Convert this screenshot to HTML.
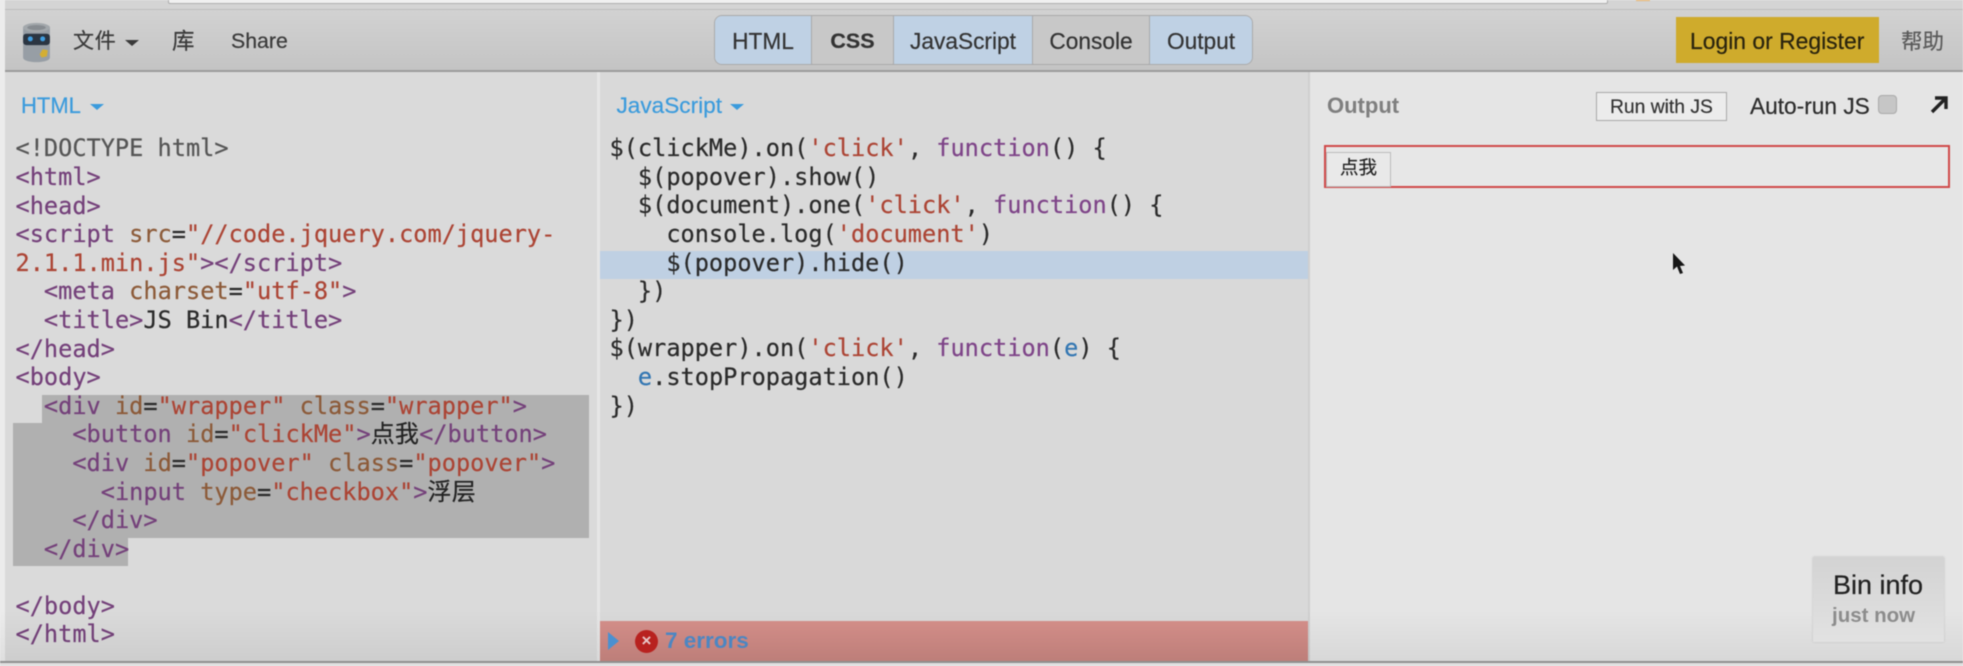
<!DOCTYPE html>
<html><head><meta charset="utf-8"><style>
html,body{margin:0;padding:0;width:1963px;height:666px;overflow:hidden;background:#efefef}
#w{position:absolute;left:0;top:0;width:1963px;height:666px;overflow:hidden;filter:blur(.6px);font-family:"Liberation Sans","Noto Sans CJK SC",sans-serif}
#w div,#w span.a{position:absolute}
.t{white-space:nowrap;line-height:1;-webkit-text-stroke:.2px currentColor}
.code{font:23.6px/28.6px "DejaVu Sans Mono","Noto Sans CJK SC",monospace;white-space:pre;color:#2a2a2a;-webkit-text-stroke:.2px currentColor}
.code b{font-weight:normal;display:block;height:28.6px}
.g{color:#555}.p{color:#74407a}.r{color:#8c5a38}.s{color:#ac4434}.k{color:#7e4488}.e{color:#3276b2}
.c{letter-spacing:.2px;font-size:24px;color:#222}
.seg{top:16px;height:48px;line-height:50px;text-align:center;font-size:22.7px;color:#333;border-right:1px solid #aaa;box-sizing:border-box;-webkit-text-stroke:.2px currentColor}
.on{background:#bfd1e4}.off{background:#c8c8c8}
</style></head><body><div id="w">
<div style="left:0;top:0;width:1963px;height:9px;background:#d4d4d4;border-bottom:1px solid #bdbdbd"></div>
<div style="left:168px;top:-2px;width:1438px;height:4px;background:#f0f0f0;border:1px solid #adadad;border-radius:2px"></div>
<div style="left:1636px;top:0;width:14px;height:1px;background:#e8b060"></div>
<div style="left:0;top:10px;width:1963px;height:60px;background:linear-gradient(#d2d2d2,#c4c4c4)"></div>
<div style="left:0;top:70px;width:1963px;height:2px;background:#9b9b9b"></div>
<div style="left:0;top:72px;width:597px;height:590px;background:#dadada"></div>
<div style="left:597px;top:72px;width:3px;height:590px;background:#e6e6e6"></div>
<div style="left:600px;top:72px;width:708px;height:590px;background:#d9d9d9"></div>
<div style="left:1308px;top:72px;width:2px;height:590px;background:#cfcfcf"></div>
<div style="left:1310px;top:72px;width:653px;height:590px;background:#e5e5e5"></div>
<div style="left:0;top:0;width:5px;height:666px;background:#ececec"></div>

<svg style="position:absolute;left:19.5px;top:20.5px" width="33" height="44" viewBox="0 0 32 42">
<path d="M3 6 C3 1 29 1 29 6 L29 35 C29 41 3 41 3 35Z" fill="#979ea5"/>
<ellipse cx="16" cy="6" rx="13" ry="4.5" fill="#a3a8ac"/><ellipse cx="16" cy="6" rx="9" ry="2.5" fill="#878c91"/>
<rect x="3" y="12" width="26" height="11" rx="3" fill="#2a3542"/>
<circle cx="10" cy="17" r="2.4" fill="#3f9de0"/><circle cx="22" cy="17" r="2.4" fill="#3f9de0"/>
<path d="M19 32l3-5 5 1-1 6-5 1z" fill="#d3ae33"/></svg>

<div class="t" style="left:73px;top:31px;font-size:21px;color:#3a3a3a;letter-spacing:.8px">文件</div>
<div style="left:125px;top:40px;width:0;height:0;border:7px solid transparent;border-top:6px solid #3a3a3a;border-bottom:0"></div>
<div class="t" style="left:172px;top:30.5px;font-size:22.5px;color:#3a3a3a">库</div>
<div class="t" style="left:231px;top:31px;font-size:21.3px;color:#3a3a3a">Share</div>

<div style="left:714px;top:15px;width:539px;height:50px;border:1px solid #aaa;border-radius:8px;box-sizing:border-box;background:#c8c8c8"></div>
<div class="seg on" style="left:715px;width:97px;border-radius:7px 0 0 7px">HTML</div>
<div class="seg off" style="left:812px;width:82px;font-weight:bold;font-size:21.5px">CSS</div>
<div class="seg on" style="left:894px;width:139px">JavaScript</div>
<div class="seg off" style="left:1033px;width:117px">Console</div>
<div class="seg on" style="left:1150px;width:102px;border-right:0;border-radius:0 7px 7px 0">Output</div>

<div style="left:1676px;top:17px;width:203px;height:46px;background:#cfab2c"></div>
<div class="t" style="left:1690px;top:30px;font-size:22.9px;color:#2a240e">Login or Register</div>
<div class="t" style="left:1901px;top:32px;font-size:21.5px;color:#5a5a5a">帮助</div>

<div class="t" style="left:21px;top:95px;font-size:22px;color:#3b9bdc">HTML</div>
<div style="left:90px;top:104px;width:0;height:0;border:7px solid transparent;border-top:6px solid #3b9bdc;border-bottom:0"></div>
<div class="t" style="left:616.5px;top:95px;font-size:22.6px;color:#3b9bdc">JavaScript</div>
<div style="left:730px;top:104px;width:0;height:0;border:7px solid transparent;border-top:6px solid #3b9bdc;border-bottom:0"></div>

<div style="left:42px;top:395px;width:547px;height:28px;background:#b0b0b0"></div>
<div style="left:13px;top:423px;width:576px;height:115px;background:#b0b0b0"></div>
<div style="left:13px;top:538px;width:115px;height:28px;background:#b0b0b0"></div>
<div style="left:600px;top:251px;width:708px;height:28px;background:#bfd0e3"></div>

<div class="code" style="left:15.5px;top:134.4px;width:580px"><b class="g">&lt;!DOCTYPE html&gt;</b><b class="p">&lt;html&gt;</b><b class="p">&lt;head&gt;</b><b><span class="p">&lt;script</span> <span class="r">src</span>=<span class="s">"//code.jquery.com/jquery-</span></b><b><span class="s">2.1.1.min.js"</span><span class="p">&gt;&lt;/script&gt;</span></b><b>  <span class="p">&lt;meta</span> <span class="r">charset</span>=<span class="s">"utf-8"</span><span class="p">&gt;</span></b><b>  <span class="p">&lt;title&gt;</span>JS Bin<span class="p">&lt;/title&gt;</span></b><b class="p">&lt;/head&gt;</b><b class="p">&lt;body&gt;</b><b>  <span class="p">&lt;div</span> <span class="r">id</span>=<span class="s">"wrapper"</span> <span class="r">class</span>=<span class="s">"wrapper"</span><span class="p">&gt;</span></b><b>    <span class="p">&lt;button</span> <span class="r">id</span>=<span class="s">"clickMe"</span><span class="p">&gt;</span><span class="c">点我</span><span class="p">&lt;/button&gt;</span></b><b>    <span class="p">&lt;div</span> <span class="r">id</span>=<span class="s">"popover"</span> <span class="r">class</span>=<span class="s">"popover"</span><span class="p">&gt;</span></b><b>      <span class="p">&lt;input</span> <span class="r">type</span>=<span class="s">"checkbox"</span><span class="p">&gt;</span><span class="c">浮层</span></b><b>    <span class="p">&lt;/div&gt;</span></b><b>  <span class="p">&lt;/div&gt;</span></b><b> </b><b class="p">&lt;/body&gt;</b><b class="p">&lt;/html&gt;</b></div>

<div class="code" style="left:609.5px;top:134.2px;width:690px"><b>$(clickMe).on(<span class="s">'click'</span>, <span class="k">function</span>() {</b><b>  $(popover).show()</b><b>  $(document).one(<span class="s">'click'</span>, <span class="k">function</span>() {</b><b>    console.log(<span class="s">'document'</span>)</b><b>    $(popover).hide()</b><b>  })</b><b>})</b><b>$(wrapper).on(<span class="s">'click'</span>, <span class="k">function</span>(<span class="e">e</span>) {</b><b>  <span class="e">e</span>.stopPropagation()</b><b>})</b></div>

<div style="left:0;top:610px;width:1963px;height:52px;background:linear-gradient(rgba(0,0,0,0),rgba(0,0,0,.06))"></div>
<div style="left:600px;top:621px;width:708px;height:41px;background:linear-gradient(#d28d88,#bd7e79)"></div>
<div style="left:608px;top:632px;width:0;height:0;border-left:11px solid #4b90d0;border-top:9px solid transparent;border-bottom:9px solid transparent"></div>
<div style="left:635px;top:630px;width:23px;height:23px;border-radius:50%;background:#b8221f;text-align:center;font-size:17px;line-height:22px;color:#e8c8c8;font-weight:bold">×</div>
<div class="t" style="left:665px;top:630px;font-size:22.5px;font-weight:bold;color:#4c86c2;-webkit-text-stroke:0">7 errors</div>

<div class="t" style="left:1327px;top:95px;font-size:22px;font-weight:bold;color:#7f7f7f;-webkit-text-stroke:0">Output</div>
<div style="left:1596px;top:92px;width:131px;height:29px;border:1px solid #a8a8a8;box-sizing:border-box;background:#ececec"></div>
<div class="t" style="left:1610px;top:97.5px;font-size:19.3px;color:#333">Run with JS</div>
<div class="t" style="left:1750px;top:95px;font-size:22.7px;color:#2c2c2c">Auto-run JS</div>
<div style="left:1878px;top:95px;width:19px;height:19px;box-sizing:border-box;background:#c6c6c6;border:1px solid #aaa;border-radius:4px"></div>
<svg style="position:absolute;left:1928px;top:94px" width="22" height="22" viewBox="0 0 22 22"><path d="M4 18 L17 5 M7 4 H18 V15" fill="none" stroke="#222" stroke-width="3.4"/></svg>
<div style="left:1324px;top:145px;width:626px;height:43px;box-sizing:border-box;border:2px solid #d04a4a;background:#e7e7e7"></div>
<div style="left:1326px;top:152px;width:65px;height:35px;box-sizing:border-box;border:1px solid #bbb;background:#e9e9e9"></div>
<div class="t" style="left:1340px;top:159px;font-size:18.5px;color:#222">点我</div>
<svg style="position:absolute;left:1671px;top:252px" width="16" height="25" viewBox="0 0 16 25"><path d="M2 1 L2 18 L6 14.5 L9 22 L12 21 L9 14 L14 13.5Z" fill="#161616"/></svg>

<div style="left:1813px;top:557px;width:131px;height:85px;background:linear-gradient(#d3d3d3,#e2e2e2);box-shadow:0 0 2px #bbb"></div>
<div class="t" style="left:1833px;top:572px;font-size:27px;color:#222">Bin info</div>
<div class="t" style="left:1832px;top:606px;font-size:20.5px;font-weight:bold;color:#8c8c8c;-webkit-text-stroke:0">just now</div>

<div style="left:0;top:661px;width:1963px;height:2px;background:#8f8f8f"></div>
<div style="left:0;top:663px;width:1963px;height:3px;background:#e0e0e0"></div>
</div></body></html>
